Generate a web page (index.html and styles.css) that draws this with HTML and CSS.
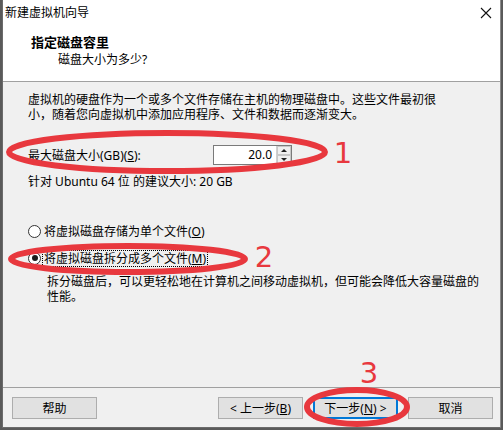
FILE: index.html
```html
<!DOCTYPE html>
<html lang="zh-CN">

<head>
    <meta charset="UTF-8">
    <meta name="viewport" content="width=device-width, initial-scale=1.0">
    <title>新建虚拟机向导</title>
    <link rel="stylesheet" href="styles.css">
</head>

<body>
    <div class="window">
        <div class="header">
            <div class="titlebar">
                <span class="title">新建虚拟机向导</span>
                <svg class="close" width="12" height="12" viewBox="0 0 12 12">
                    <path d="M1 1 L11 11 M11 1 L1 11" stroke="#111" stroke-width="1.1" fill="none" />
                </svg>
            </div>
            <div class="heading">指定磁盘容里</div>
            <div class="subheading">磁盘大小为多少?</div>
        </div>

        <div class="content">
            <p class="intro">虚拟机的硬盘作为一个或多个文件存储在主机的物理磁盘中。这些文件最初很<br>小，随着您向虚拟机中添加应用程序、文件和数据而逐渐变大。</p>

            <div class="size-row">
                <label class="size-label">最大磁盘大小(GB)(<u>S</u>):</label>
                <div class="spin">
                    <span class="spin-value">20.0</span>
                    <span class="spin-buttons">
                        <span class="spin-btn"><span class="arrow-up"></span></span>
                        <span class="spin-btn"><span class="arrow-down"></span></span>
                    </span>
                </div>
            </div>

            <p class="hint">针对 Ubuntu 64 位 的建议大小: 20 GB</p>

            <div class="radio-row first">
                <span class="radio"></span>
                <span>将虚拟磁盘存储为单个文件(<u>O</u>)</span>
            </div>
            <div class="radio-row">
                <span class="radio checked"></span>
                <span class="focus">将虚拟磁盘拆分成多个文件(<u>M</u>)</span>
            </div>

            <p class="desc">拆分磁盘后，可以更轻松地在计算机之间移动虚拟机，但可能会降低大容量磁盘的<br>性能。</p>
        </div>

        <div class="footer">
            <button class="btn">帮助</button>
            <div class="nav">
                <button class="btn">&lt; 上一步(<u>B</u>)</button>
                <button class="btn default">下一步(<u>N</u>) &gt;</button>
                <button class="btn">取消</button>
            </div>
        </div>
    </div>

    <!-- red annotations drawn over the dialog -->
    <svg class="marks" width="503" height="430" viewBox="0 0 503 430">
        <ellipse cx="167" cy="152" rx="158" ry="19" />
        <ellipse cx="128" cy="259" rx="117" ry="13" />
        <ellipse cx="357" cy="407" rx="50" ry="17" />
        <text x="343" y="163">1</text>
        <text x="264" y="267">2</text>
        <text x="369" y="383">3</text>
    </svg>
</body>

</html>
```

FILE: styles.css
```css
body {
    margin: 0;
    width: 503px;
    height: 430px;
    position: relative;
    overflow: hidden;
    background: #5a5a5a;
    font-family: "Noto Sans", "Noto Sans CJK SC", sans-serif;
    font-size: 12px;
    color: #000;
}

.window {
    margin-left: 2px;
    width: 497px;
    height: 427px;
    border-left: 1px solid #6b6b6b;
    border-right: 1px solid #8c8c8c;
    border-bottom: 1px solid #6b6b6b;
    background: #f0f0f0;
}

.header {
    height: 81px;
    background: #fff;
    border-bottom: 1px solid #a0a0a0;
}

.titlebar {
    height: 26px;
    display: flex;
    align-items: center;
    justify-content: space-between;
    padding: 0 8px 0 2px;
}

.title {
    line-height: 16px;
}

.close {
    display: block;
    margin-top: -1px;
}

.heading {
    margin: 8px 0 0 28px;
    font-size: 13px;
    font-weight: bold;
    line-height: 16px;
}

.subheading {
    margin: 2px 0 0 55px;
    line-height: 16px;
}

.content {
    height: 305px;
    padding-left: 25px;
    border-bottom: 1px solid #a0a0a0;
}

.content p {
    margin: 0;
    line-height: 15px;
}

.intro {
    padding-top: 10px;
}

.size-row {
    display: flex;
    align-items: center;
    height: 20px;
    margin-top: 23px;
}

.size-label {
    width: 185px;
}

.spin {
    display: flex;
    align-items: center;
    width: 77px;
    height: 18px;
    background: #fff;
    border: 1px solid #7a7a7a;
}

.spin-value {
    flex: 1;
    text-align: right;
    padding-right: 4px;
    line-height: 18px;
}

.spin-buttons {
    display: flex;
    flex-direction: column;
    width: 14px;
    height: 18px;
    border-left: 1px solid #d0d0d0;
}

.spin-btn {
    flex: 1;
    display: flex;
    align-items: center;
    justify-content: center;
    background: #f0f0f0;
    border: 1px solid #c8c8c8;
}

.arrow-up {
    border-left: 3px solid transparent;
    border-right: 3px solid transparent;
    border-bottom: 3px solid #222;
}

.arrow-down {
    border-left: 3px solid transparent;
    border-right: 3px solid transparent;
    border-top: 3px solid #222;
}

.content .hint {
    margin-top: 9px;
}

.radio-row {
    display: flex;
    align-items: center;
    gap: 3px;
    height: 18px;
    margin-top: 9px;
}

.radio-row.first {
    margin-top: 33px;
}

.radio {
    width: 11px;
    height: 11px;
    border: 1px solid #333;
    border-radius: 50%;
    background: #fff;
    display: flex;
    align-items: center;
    justify-content: center;
}

.radio.checked::after {
    content: "";
    width: 6px;
    height: 6px;
    border-radius: 50%;
    background: #1a1a1a;
}

.focus {
    margin-left: -2px;
    padding: 0 1px;
    border: 1px dotted #000;
    line-height: 15px;
}

.content .desc {
    margin-top: 7px;
    padding-left: 19px;
}

.footer {
    display: flex;
    justify-content: space-between;
    padding: 9px 7px 0 9px;
}

.nav {
    display: flex;
    gap: 10px;
}

.btn {
    width: 85px;
    height: 22px;
    padding: 0;
    font-family: inherit;
    font-size: 12px;
    color: #000;
    background: #e1e1e1;
    border: 1px solid #adadad;
}

.btn.default {
    border-color: #0078d7;
    box-shadow: inset 0 0 0 1px #0078d7;
}

.marks {
    position: absolute;
    top: 0;
    left: 0;
    pointer-events: none;
}

.marks ellipse {
    fill: none;
    stroke: #e8383e;
    stroke-width: 6;
}

.marks text {
    fill: #e8383e;
    font-family: "DejaVu Sans", sans-serif;
    font-size: 29px;
    text-anchor: middle;
}
```
